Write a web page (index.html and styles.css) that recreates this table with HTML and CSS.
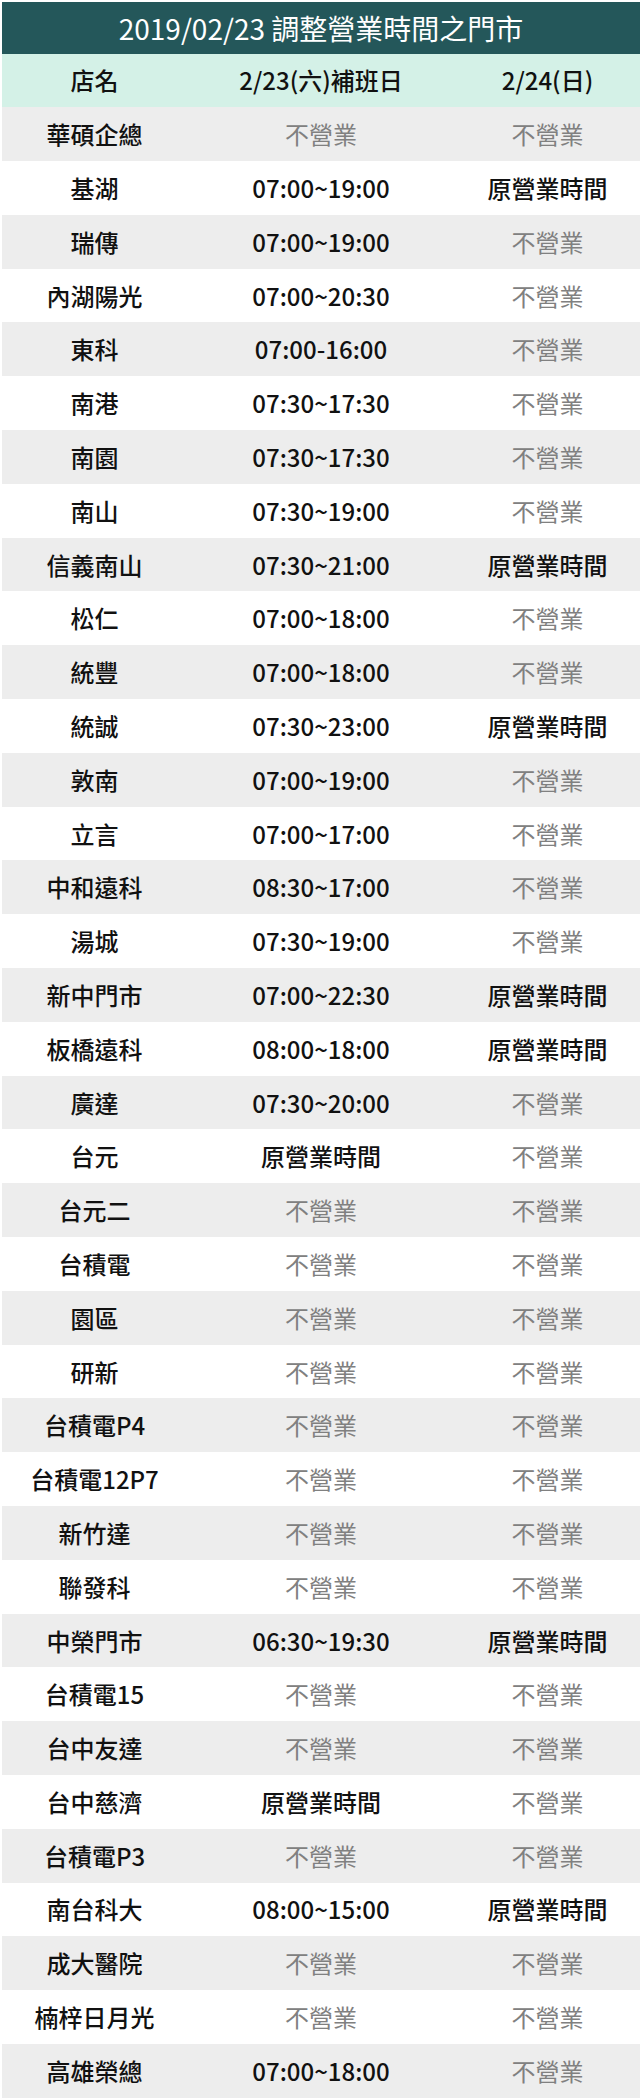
FILE: index.html
```html
<!DOCTYPE html>
<html lang="zh-Hant">
<head>
<meta charset="utf-8">
<title>2019/02/23 調整營業時間之門市</title>
<link rel="stylesheet" href="styles.css">
</head>
<body>
<div class="sheet">
  <div class="title">2019/02/23 調整營業時間之門市</div>
  <div class="row head"><div>店名</div><div>2/23(六)補班日</div><div>2/24(日)</div></div>
  <div class="row"><div>華碩企總</div><div class="off">不營業</div><div class="off">不營業</div></div>
  <div class="row"><div>基湖</div><div>07:00~19:00</div><div>原營業時間</div></div>
  <div class="row"><div>瑞傳</div><div>07:00~19:00</div><div class="off">不營業</div></div>
  <div class="row"><div>內湖陽光</div><div>07:00~20:30</div><div class="off">不營業</div></div>
  <div class="row"><div>東科</div><div>07:00-16:00</div><div class="off">不營業</div></div>
  <div class="row"><div>南港</div><div>07:30~17:30</div><div class="off">不營業</div></div>
  <div class="row"><div>南園</div><div>07:30~17:30</div><div class="off">不營業</div></div>
  <div class="row"><div>南山</div><div>07:30~19:00</div><div class="off">不營業</div></div>
  <div class="row"><div>信義南山</div><div>07:30~21:00</div><div>原營業時間</div></div>
  <div class="row"><div>松仁</div><div>07:00~18:00</div><div class="off">不營業</div></div>
  <div class="row"><div>統豐</div><div>07:00~18:00</div><div class="off">不營業</div></div>
  <div class="row"><div>統誠</div><div>07:30~23:00</div><div>原營業時間</div></div>
  <div class="row"><div>敦南</div><div>07:00~19:00</div><div class="off">不營業</div></div>
  <div class="row"><div>立言</div><div>07:00~17:00</div><div class="off">不營業</div></div>
  <div class="row"><div>中和遠科</div><div>08:30~17:00</div><div class="off">不營業</div></div>
  <div class="row"><div>湯城</div><div>07:30~19:00</div><div class="off">不營業</div></div>
  <div class="row"><div>新中門市</div><div>07:00~22:30</div><div>原營業時間</div></div>
  <div class="row"><div>板橋遠科</div><div>08:00~18:00</div><div>原營業時間</div></div>
  <div class="row"><div>廣達</div><div>07:30~20:00</div><div class="off">不營業</div></div>
  <div class="row"><div>台元</div><div>原營業時間</div><div class="off">不營業</div></div>
  <div class="row"><div>台元二</div><div class="off">不營業</div><div class="off">不營業</div></div>
  <div class="row"><div>台積電</div><div class="off">不營業</div><div class="off">不營業</div></div>
  <div class="row"><div>園區</div><div class="off">不營業</div><div class="off">不營業</div></div>
  <div class="row"><div>研新</div><div class="off">不營業</div><div class="off">不營業</div></div>
  <div class="row"><div>台積電P4</div><div class="off">不營業</div><div class="off">不營業</div></div>
  <div class="row"><div>台積電12P7</div><div class="off">不營業</div><div class="off">不營業</div></div>
  <div class="row"><div>新竹達</div><div class="off">不營業</div><div class="off">不營業</div></div>
  <div class="row"><div>聯發科</div><div class="off">不營業</div><div class="off">不營業</div></div>
  <div class="row"><div>中榮門市</div><div>06:30~19:30</div><div>原營業時間</div></div>
  <div class="row"><div>台積電15</div><div class="off">不營業</div><div class="off">不營業</div></div>
  <div class="row"><div>台中友達</div><div class="off">不營業</div><div class="off">不營業</div></div>
  <div class="row"><div>台中慈濟</div><div>原營業時間</div><div class="off">不營業</div></div>
  <div class="row"><div>台積電P3</div><div class="off">不營業</div><div class="off">不營業</div></div>
  <div class="row"><div>南台科大</div><div>08:00~15:00</div><div>原營業時間</div></div>
  <div class="row"><div>成大醫院</div><div class="off">不營業</div><div class="off">不營業</div></div>
  <div class="row"><div>楠梓日月光</div><div class="off">不營業</div><div class="off">不營業</div></div>
  <div class="row"><div>高雄榮總</div><div>07:00~18:00</div><div class="off">不營業</div></div>
</div>
</body>
</html>
```

FILE: styles.css
```css
html, body {
  margin: 0;
  padding: 0;
  background: #ffffff;
}

body {
  font-family: "Noto Sans CJK TC", "Noto Sans", sans-serif;
  color: #111111;
}

.sheet {
  padding: 2px 0 0 2px;
  display: flex;
  flex-direction: column;
}

.title {
  height: 51.5px;
  background: #24575a;
  color: #ffffff;
  font-size: 28px;
  display: flex;
  align-items: center;
  justify-content: center;
  line-height: 1;
}

.row {
  height: 53.8px;
  display: grid;
  grid-template-columns: 29% 42% 29%;
  align-items: center;
  font-size: 24px;
  font-weight: 500;
  line-height: 1;
  background: #ffffff;
}

.row > div {
  text-align: center;
  white-space: nowrap;
}

.row:nth-child(odd) {
  background: #ededed;
}

.row.head {
  background: #d4f1e7;
}

.off {
  color: #808080;
  font-weight: 400;
}
```
